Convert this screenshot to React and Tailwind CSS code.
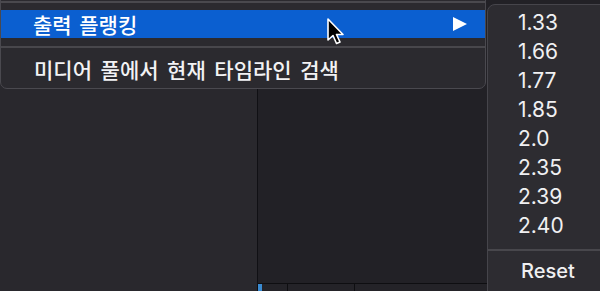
import React from 'react';

const ratios = ['1.33', '1.66', '1.77', '1.85', '2.0', '2.35', '2.39', '2.40'];

function Cursor() {
  return (
    <svg className="absolute left-[326px] top-[18px]" width="22" height="30" viewBox="0 0 22 30">
      <path
        d="M2 1 L2 22 L7 17.5 L10.5 25.5 L14 24 L10.5 16.5 L17 16.5 Z"
        fill="#000"
        stroke="#fff"
        strokeWidth="1.6"
        strokeLinejoin="round"
      />
    </svg>
  );
}

export default function App() {
  return (
    <div
      className="relative w-[600px] h-[291px] overflow-hidden bg-[#1f1e23]"
      style={{ fontFamily: 'Inter, "Noto Sans CJK KR", sans-serif' }}
    >
      {/* background panels */}
      <div className="flex h-full">
        <div className="w-[258px] h-full bg-[#29282d] border-r border-[#101014]" />
        <div className="flex-1 flex flex-col">
          <div className="flex-1 bg-[#222126]" />
          <div className="h-[8px] flex border-t border-[#0e0e11] bg-[#242328]">
            <div className="w-[4px] bg-[#3a8ad0]" />
            <div className="w-[26px] border-r border-[#0e0e11]" />
            <div className="w-[67px] border-r border-[#0e0e11]" />
          </div>
        </div>
      </div>

      {/* main context menu */}
      <div className="absolute left-0 top-[-8px] w-[486px] bg-[#2b2a2f] border border-[#4a494f] rounded-b-[7px] flex flex-col">
        <div className="h-[8px]" />
        <div className="h-[2px] bg-[#4a494e]" />
        <div className="h-[7px]" />
        <div className="h-[28px] bg-[#0b5fd0] flex items-center pl-[32px] pr-[18px] text-white text-[21px] font-medium leading-none">
          <span className="flex-1 pt-[2px] [word-spacing:2px]">출력 플랭킹</span>
          <svg width="14" height="14" viewBox="0 0 14 14">
            <polygon points="0,0 14,7 0,14" fill="#fff" />
          </svg>
        </div>
        <div className="h-[8px]" />
        <div className="h-[2px] bg-[#48474c]" />
        <div className="h-[8px]" />
        <div className="h-[28px] flex items-center pl-[33px] text-[#f2f2f4] text-[21px] font-medium leading-none [word-spacing:3px]">
          미디어 풀에서 현재 타임라인 검색
        </div>
        <div className="h-[4px]" />
      </div>

      {/* submenu */}
      <div className="absolute left-[487px] top-[4px] w-[130px] h-[300px] bg-[#2d2c31] border border-[#46454b] rounded-tl-[8px] flex flex-col pt-[3px]">
        {ratios.map((r) => (
          <div key={r} className="h-[29px] flex items-center pl-[30px] text-[#f0f0f2] text-[21px] leading-none">
            {r}
          </div>
        ))}
        <div className="h-[9px]" />
        <div className="h-[2px] bg-[#48474c]" />
        <div className="h-[40px] flex items-center pl-[33px] text-[#f0f0f2] text-[20px] font-medium leading-none">
          Reset
        </div>
      </div>

      <Cursor />
    </div>
  );
}
